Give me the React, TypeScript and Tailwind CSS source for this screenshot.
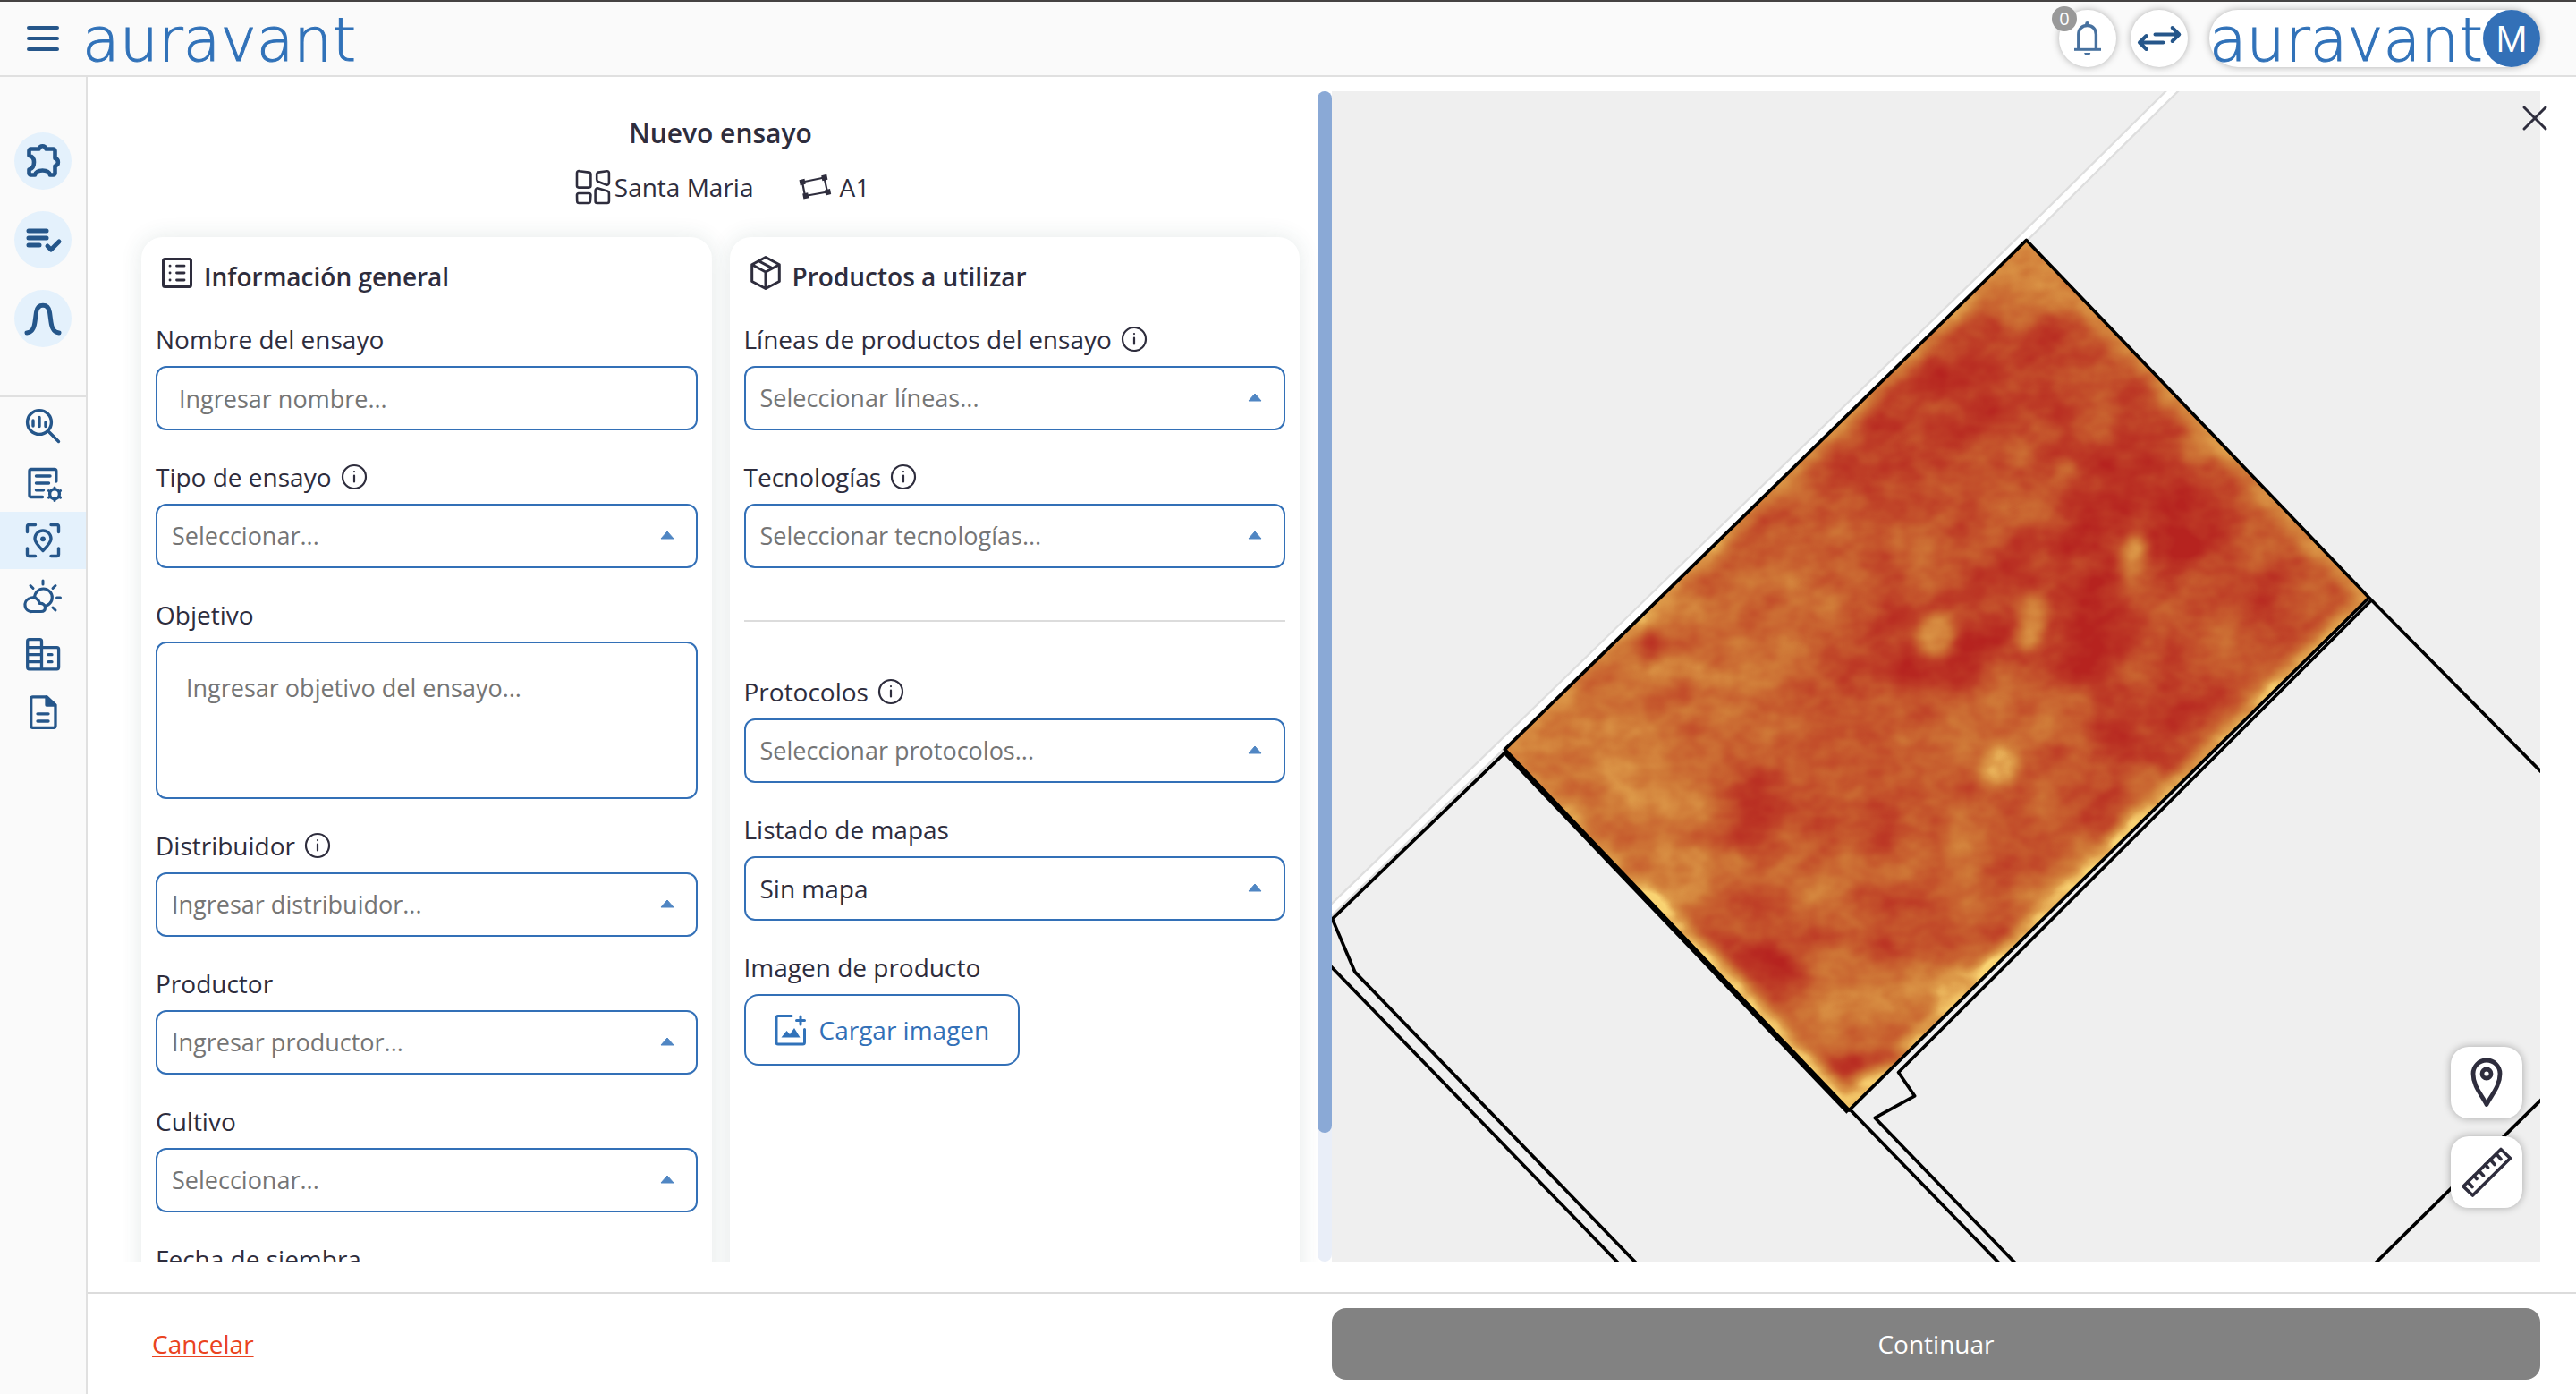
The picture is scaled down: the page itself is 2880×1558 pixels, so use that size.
import type { ReactNode } from "react";

const INK = "#2e2d3d";
const NAVY = "#25568a";

/* ---------- brand ---------- */

function Wordmark() {
  return (
    <span className="pt-1 font-['DejaVu_Sans',sans-serif] text-[68px] leading-[60px] font-extralight text-[#3172b9] [-webkit-text-stroke:1px_#3172b9]">
      auravant
    </span>
  );
}

/* ---------- icons ---------- */

function Stroke({
  size,
  color,
  width,
  children,
}: {
  size: number;
  color: string;
  width: number;
  children: ReactNode;
}) {
  return (
    <svg
      width={size}
      height={size}
      viewBox={`0 0 ${size} ${size}`}
      fill="none"
      stroke={color}
      strokeWidth={width}
      strokeLinecap="round"
      strokeLinejoin="round"
      className="block shrink-0"
      aria-hidden="true"
    >
      {children}
    </svg>
  );
}

const MenuIcon = () => (
  <Stroke size={40} color={NAVY} width={4}>
    <path d="M4 8h32M4 20h32M4 32h32" />
  </Stroke>
);

const PuzzleIcon = () => (
  <Stroke size={64} color={NAVY} width={4.6}>
    <path d="M16.500 26V20.500a2 2 0 0 1 2-2H27.500a4.200 4.600 0 0 1 8 0H43.500a2 2 0 0 1 2 2V29a4.300 4.300 0 0 1 0 8.400V45.500a2 2 0 0 1-2 2H40c-1-3.500-4-5-8.500-5s-7.500 1.500-8.500 5H18.500a2 2 0 0 1-2-2V41.500c4-1 5.500-4 5.500-8.300s-1.500-6.500-5.500-7.200z" />
  </Stroke>
);

const ListCheckIcon = () => (
  <Stroke size={64} color={NAVY} width={5}>
    <path d="M16 22h20M16 30h20M16 38h12M37 39l4 4 9-9" />
  </Stroke>
);

const CurveIcon = () => (
  <Stroke size={64} color={NAVY} width={5}>
    <path d="M14 48c5.500-.5 8-4 9-12l1.500-11c.8-5.500 3.500-7.700 7.500-7.700s6.700 2.200 7.500 7.700L41 36c1 8 3.500 11.500 9 12" />
  </Stroke>
);

const AnalysisIcon = () => (
  <Stroke size={48} color={NAVY} width={3.4}>
    <circle cx="20" cy="20" r="13.400" />
    <path d="M13 18v6M20 14.500v10M27 20v4.500M30.500 30.500l11 11" />
  </Stroke>
);

const NoteGearIcon = () => (
  <Stroke size={48} color={NAVY} width={3.4}>
    <path d="M38.800 22V10.500a2 2 0 0 0-2-2H11a2 2 0 0 0-2 2V37.500a2 2 0 0 0 2 2H23.500M16.500 16h15.500M16.500 24h14M16.500 31.800h8" />
    <circle cx="37" cy="36.300" r="5.400" />
    <path
      d="M37 30.500v-1.500M37 43.500v-1.500M31.700 33.200l-1.300-.7M43.600 40.100l-1.300-.7M42.300 33.200l1.300-.7M30.400 40.100l1.300-.7"
      strokeWidth="3"
    />
  </Stroke>
);

const FocusPinIcon = () => (
  <Stroke size={48} color={NAVY} width={3.4}>
    <path d="M6.500 14.500V8.500a2 2 0 0 1 2-2h7M33 6.500h6.500a2 2 0 0 1 2 2v6M41.500 33v6.500a2 2 0 0 1-2 2H33M15.500 41.500H8.500a2 2 0 0 1-2-2V33" />
    <path d="M24 35.500c-4.500-4.500-9-9-9-13.500a9 9 0 0 1 18 0c0 4.500-4.500 9-9 13.500z" />
    <circle cx="24" cy="22.300" r="2.900" fill={NAVY} stroke="none" />
  </Stroke>
);

const WeatherIcon = () => (
  <Stroke size={48} color={NAVY} width={3.2}>
    <path
      d="M24 5v4M10 10.500l3 3M38 10.500l-3 3M39.500 24h4M35 35l3 3"
      strokeWidth="3"
    />
    <circle cx="24.500" cy="23.800" r="9.800" />
    <path
      d="M11.500 39.500a7 7.500 0 0 1-3-14.500c3-2 7-1.500 9.500 1 1.500 1.500 2 2.800 2.300 4.500 3.500-.5 6.200 1.500 6.200 4.500s-2 4.500-4.500 4.500z"
      fill="#fafafa"
    />
  </Stroke>
);

const BuildingIcon = () => (
  <Stroke size={48} color={NAVY} width={3.3}>
    <path d="M22.500 39.800V8.700a2 2 0 0 0-2-2H8.700a2 2 0 0 0-2 2V37.800a2 2 0 0 0 2 2H39.600a2 2 0 0 0 2-2V17.700a2 2 0 0 0-2-2H6.700M6.700 23.700H22.500M6.700 31.700H22.500M30 23.700h4M30 31.700h4" />
  </Stroke>
);

const DocumentIcon = () => (
  <Stroke size={48} color={NAVY} width={3.3}>
    <path d="M28 6.800H12.700a2 2 0 0 0-2 2V39.300a2 2 0 0 0 2 2H36a2 2 0 0 0 2-2V16zM18 25.800h12M18 34h12" />
    <path d="M28 7v9h9.500z" fill={NAVY} />
  </Stroke>
);

const BellIcon = () => (
  <Stroke size={64} color="#47719f" width={3.4}>
    <path d="M21.800 43V27.500c0-6 4-10 9.800-10s9.800 4 9.800 10V43" />
    <path d="M18.500 44.300h27" strokeLinecap="square" strokeWidth="3" />
    <circle cx="31.600" cy="15.500" r="2.400" fill="#47719f" stroke="none" />
    <path d="M28.200 48h7c0 4-7 4-7 0z" fill="#47719f" stroke="none" />
  </Stroke>
);

const SwapIcon = () => (
  <Stroke size={64} color={NAVY} width={4}>
    <path d="M27.500 27.500H54M46.700 20l7.600 7.500-7.600 7.500M36.500 36.500H10.500M17.600 29l-7.600 7.500 7.600 7.500" />
  </Stroke>
);

const FarmIcon = () => (
  <Stroke size={40} color={INK} width={2.6}>
    <path d="M4.800 2.200l10.400 1.400a2.400 2.400 0 0 1 2.200 2.400V18.600a2 2 0 0 1-2 2H4a2 2 0 0 1-2-2V4.400a2.200 2.200 0 0 1 2.800-2.200zM4 27h11.400a2 2 0 0 1 2 2.200l-.5 6.800a2.200 2.200 0 0 1-2.200 2H4.400a2.200 2.200 0 0 1-2.200-2L2 29.200A2 2 0 0 1 4 27zM25.600 3.600l10-1.300a2 2 0 0 1 2.300 2V15.500a2.200 2.200 0 0 1-3 2l-9-3.500a2.800 2.800 0 0 1-1.700-2.500V6a2.400 2.400 0 0 1 1.400-2.400zM25.800 21.400l10.200 3a2.600 2.600 0 0 1 1.900 2.500V36a2 2 0 0 1-2 2H24.600a2 2 0 0 1-2-2V24a2.600 2.600 0 0 1 3.200-2.600z" />
  </Stroke>
);

const FieldIcon = () => (
  <Stroke size={40} color={INK} width={2.2}>
    <path d="M6 14.500L30.500 9.500 34 25.500 9 30z" />
    <g fill={INK} stroke="none">
      <path d="M2.500 12.200l6-1.400 1.200 6-6 1.400zM27.200 7.200l6-1.400 1.200 6-6 1.400zM31 23.400l6-1.400 1.200 6-6 1.400zM6.200 27.600l6-1.400 1.200 6-6 1.400z" />
    </g>
  </Stroke>
);

const ListBoxIcon = () => (
  <Stroke size={40} color={INK} width={3}>
    <rect x="4.500" y="4.500" width="31" height="31" rx="2" />
    <path d="M12 12.200h.1M12 20h.1M12 28h.1M19.500 12.200h8.500M19.500 20h8.500M19.500 28h8.500" strokeWidth="2.800" />
  </Stroke>
);

const PackageIcon = () => (
  <Stroke size={40} color={INK} width={3}>
    <path d="M20 2.500l15.300 8.300V29.500L20 37.500 4.700 29.500V10.800zM4.700 10.800L20 19l15.300-8.200M20 19v18.500M12.300 6.700l15.300 8.200" />
  </Stroke>
);

const InfoIcon = () => (
  <Stroke size={30} color={INK} width={2.2}>
    <circle cx="15" cy="15" r="13" />
    <path d="M15 13.500v7M15 9v.1" />
  </Stroke>
);

const ImagePlusIcon = () => (
  <Stroke size={40} color="#3172b9" width={3}>
    <path d="M21 4.500H6a2 2 0 0 0-2 2V34a2 2 0 0 0 2 2H33.500a2 2 0 0 0 2-2V19.500" />
    <path d="M31 5v9M26.500 9.500h9" />
    <path d="M9.500 28.500l6-7.500 3.500 4 5-7 6.500 10.500z" fill="#3172b9" stroke="none" />
  </Stroke>
);

const CloseIcon = () => (
  <Stroke size={40} color={INK} width={3}>
    <path d="M8 8l24 24M32 8L8 32" />
  </Stroke>
);

const MapPinIcon = () => (
  <Stroke size={80} color={INK} width={4.8}>
    <path d="M40 64.500C35 54 25 44.500 25 30a15 15 0 0 1 30 0c0 14.500-10 24-15 34.500z" />
    <circle cx="40" cy="30" r="5" />
  </Stroke>
);

const RulerIcon = () => (
  <Stroke size={80} color={INK} width={3.6}>
    <path d="M14 56L56 14.500 66.500 24.500 24.500 66z" />
    <path d="M19 51l5 5.500M26 44l3 3.500M31.500 38.500l5 5.500M38.500 31.500l3 3.500M44 26l5 5.500M51 20l5 5.500" />
  </Stroke>
);

/* ---------- header & sidebar ---------- */

function Header() {
  return (
    <header className="flex h-[86px] shrink-0 items-center justify-between border-t-2 border-b-2 border-t-[#454343] border-b-[#e0e0e0] bg-[#fafafa] pr-10 pl-7">
      <div className="flex items-center gap-6">
        <button type="button" aria-label="Menú">
          <MenuIcon />
        </button>
        <a href="#inicio" className="flex items-center">
          <Wordmark />
        </a>
      </div>
      <div className="flex items-center">
        <button
          type="button"
          aria-label="Notificaciones"
          className="relative mr-4 rounded-full bg-white shadow-[0_0_8px_rgba(0,0,0,0.3)]"
        >
          <BellIcon />
          <span className="absolute -top-1 -left-2 flex size-7 items-center justify-center rounded-full bg-[#999999] text-xl text-white">
            0
          </span>
        </button>
        <button
          type="button"
          aria-label="Cambiar cuenta"
          className="mr-6 rounded-full bg-white shadow-[0_0_8px_rgba(0,0,0,0.3)]"
        >
          <SwapIcon />
        </button>
        <button
          type="button"
          className="flex h-16 items-center rounded-full bg-white shadow-[0_0_8px_rgba(0,0,0,0.3)]"
        >
          <Wordmark />
          <span className="flex size-16 items-center justify-center rounded-full bg-[#3370b7] text-[40px] font-medium text-white">
            M
          </span>
        </button>
      </div>
    </header>
  );
}

const shortcuts = [
  { label: "Extensiones", icon: <PuzzleIcon /> },
  { label: "Tareas", icon: <ListCheckIcon /> },
  { label: "Curvas", icon: <CurveIcon /> },
];

const sections = [
  { label: "Análisis", icon: <AnalysisIcon />, active: false },
  { label: "Planificación", icon: <NoteGearIcon />, active: false },
  { label: "Ensayos", icon: <FocusPinIcon />, active: true },
  { label: "Clima", icon: <WeatherIcon />, active: false },
  { label: "Empresa", icon: <BuildingIcon />, active: false },
  { label: "Reportes", icon: <DocumentIcon />, active: false },
];

function Sidebar() {
  return (
    <nav className="w-[98px] shrink-0 border-r-2 border-[#e0e0e0] bg-[#fafafa]">
      <div className="flex flex-col items-center gap-6 border-b-2 border-[#e0e0e0] pt-[62px] pb-[54px]">
        {shortcuts.map((item) => (
          <a key={item.label} href="#accesos" aria-label={item.label} className="rounded-full bg-[#e4f1fc]">
            {item.icon}
          </a>
        ))}
      </div>
      {sections.map((item) => (
        <a
          key={item.label}
          href="#seccion"
          aria-label={item.label}
          className={`flex h-16 items-center justify-center ${item.active ? "bg-[#e4f1fc]" : ""}`}
        >
          {item.icon}
        </a>
      ))}
    </nav>
  );
}

/* ---------- form ---------- */

function Field({
  id,
  label,
  info = false,
  children,
}: {
  id: string;
  label: string;
  info?: boolean;
  children: ReactNode;
}) {
  return (
    <div>
      <div className="mb-2.5 flex items-center gap-2.5">
        <label htmlFor={id}>{label}</label>
        {info && (
          <button type="button" aria-label={`Ayuda: ${label}`}>
            <InfoIcon />
          </button>
        )}
      </div>
      {children}
    </div>
  );
}

function SelectField({
  id,
  label,
  value,
  info,
  filled = false,
}: {
  id: string;
  label: string;
  value: string;
  info?: boolean;
  filled?: boolean;
}) {
  return (
    <Field id={id} label={label} info={info}>
      <div className="relative">
        <select
          id={id}
          className={`block h-[72px] w-full appearance-none rounded-xl border-2 border-[#3370b7] bg-white px-4 ${filled ? "text-[#2e2d3d]" : "text-[27px] text-[#757575]"}`}
        >
          <option>{value}</option>
        </select>
        <svg
          viewBox="0 0 16 10"
          className="pointer-events-none absolute top-[30px] right-[26px] h-2.5 w-4"
          aria-hidden="true"
        >
          <path d="M8 1l7 8H1z" fill="#5086c3" stroke="#5086c3" strokeLinejoin="round" />
        </svg>
      </div>
    </Field>
  );
}

function Card({ icon, title, children }: { icon: ReactNode; title: string; children: ReactNode }) {
  return (
    <section className="rounded-3xl bg-white px-4 pt-5 pb-6 shadow-[0_0_24px_rgba(40,80,70,0.12)]">
      <h2 className="mb-[30px] flex items-start gap-2.5 pl-1 font-semibold">
        {icon}
        <span className="pt-1">{title}</span>
      </h2>
      <div className="flex flex-col gap-8">{children}</div>
    </section>
  );
}

function TrialForm() {
  return (
    <div className="flex min-h-0 min-w-0">
      <div className="min-w-0 flex-1 overflow-y-auto px-5 pt-[27px] [scrollbar-width:none]">
        <h1 className="text-center text-[30px] leading-10 font-semibold">Nuevo ensayo</h1>
        <div className="mt-5 mb-9 flex justify-center gap-12 pl-1">
          <span className="flex gap-1">
            <FarmIcon />
            Santa Maria
          </span>
          <span className="flex gap-2">
            <FieldIcon />
            A1
          </span>
        </div>
        <div className="grid grid-cols-2 gap-5">
          <Card icon={<ListBoxIcon />} title="Información general">
            <Field id="nombre" label="Nombre del ensayo">
              <input
                id="nombre"
                type="text"
                placeholder="Ingresar nombre..."
                className="block h-[72px] w-full rounded-xl border-2 border-[#3370b7] px-6 text-[27px] placeholder:text-[#757575]"
              />
            </Field>
            <SelectField id="tipo" label="Tipo de ensayo" value="Seleccionar..." info />
            <Field id="objetivo" label="Objetivo">
              <textarea
                id="objetivo"
                placeholder="Ingresar objetivo del ensayo..."
                className="block h-44 w-full resize-none rounded-xl border-2 border-[#3370b7] px-8 py-[30px] text-[27px] placeholder:text-[#757575]"
              />
            </Field>
            <SelectField id="distribuidor" label="Distribuidor" value="Ingresar distribuidor..." info />
            <SelectField id="productor" label="Productor" value="Ingresar productor..." />
            <SelectField id="cultivo" label="Cultivo" value="Seleccionar..." />
            <Field id="siembra" label="Fecha de siembra">
              <input
                id="siembra"
                type="text"
                className="block h-[72px] w-full rounded-xl border-2 border-[#3370b7] px-6 text-[27px]"
              />
            </Field>
          </Card>
          <Card icon={<PackageIcon />} title="Productos a utilizar">
            <SelectField id="lineas" label="Líneas de productos del ensayo" value="Seleccionar líneas..." info />
            <SelectField id="tecnologias" label="Tecnologías" value="Seleccionar tecnologías..." info />
            <hr className="my-[26px] border-t-2 border-[#dcdcdc]" />
            <SelectField id="protocolos" label="Protocolos" value="Seleccionar protocolos..." info />
            <SelectField id="mapas" label="Listado de mapas" value="Sin mapa" filled />
            <Field id="imagen" label="Imagen de producto">
              <button
                id="imagen"
                type="button"
                className="flex h-20 items-center gap-3 rounded-2xl border-2 border-[#3370b7] pr-8 pl-[30px] text-[#3370b7]"
              >
                <ImagePlusIcon />
                Cargar imagen
              </button>
            </Field>
          </Card>
        </div>
      </div>
      <div className="w-4 shrink-0 rounded-full bg-[#e9eef8]">
        <div className="h-[89%] rounded-full bg-[#8aa9d6]" />
      </div>
    </div>
  );
}

/* ---------- field map ---------- */

// cx, cy, rx, ry, rotation, grey level (0 = deep red, 255 = yellow), opacity
const heat: number[][] = [
  [400, 790, 230, 120, -45, 150, 0.8],
  [520, 660, 130, 40, -40, 125, 0.6],
  [430, 860, 140, 50, 45, 160, 0.8],
  [620, 630, 60, 26, -30, 150, 0.6],
  [560, 760, 40, 60, 20, 160, 0.5],
  [830, 370, 150, 60, -42, 25, 0.85],
  [740, 440, 100, 50, -40, 45, 0.7],
  [890, 245, 60, 50, 0, 175, 0.9],
  [960, 400, 110, 60, 30, 55, 0.6],
  [1030, 520, 110, 80, 20, 15, 0.85],
  [940, 580, 120, 50, -20, 35, 0.7],
  [1090, 440, 60, 30, 40, 50, 0.7],
  [960, 670, 70, 60, 0, 10, 0.9],
  [780, 670, 100, 50, 0, 25, 0.85],
  [770, 715, 55, 20, 0, 10, 0.8],
  [680, 740, 60, 30, 0, 60, 0.6],
  [1180, 630, 80, 50, 0, 60, 0.7],
  [1050, 770, 90, 60, -40, 30, 0.85],
  [1100, 720, 60, 40, -40, 90, 0.5],
  [990, 860, 60, 30, -40, 50, 0.7],
  [840, 770, 120, 40, -15, 140, 0.6],
  [720, 830, 120, 40, -10, 110, 0.5],
  [580, 890, 70, 60, 30, 35, 0.75],
  [500, 800, 40, 30, 30, 55, 0.6],
  [700, 900, 140, 50, -15, 80, 0.5],
  [560, 1050, 40, 70, -20, 20, 0.9],
  [590, 940, 60, 30, 0, 70, 0.5],
  [620, 960, 60, 34, 0, 165, 0.8],
  [800, 920, 80, 34, -20, 150, 0.6],
  [750, 1040, 60, 40, 0, 65, 0.7],
  [690, 1110, 110, 44, -10, 165, 0.9],
  [880, 920, 60, 20, -40, 60, 0.5],
  [930, 950, 70, 24, -42, 165, 0.7],
  [460, 960, 40, 30, 30, 185, 0.8],
  [540, 1000, 30, 20, 40, 150, 0.5],
];

const spots: number[][] = [
  [778, 668, 24, 26, 20, 190, 1],
  [856, 824, 23, 25, 20, 222, 1],
  [894, 652, 16, 34, 10, 178, 0.95],
  [1020, 578, 14, 30, 15, 178, 0.9],
  [800, 1090, 30, 24, -40, 228, 0.9],
  [700, 1198, 24, 12, 0, 235, 1],
  [418, 650, 18, 10, -40, 235, 0.9],
  [880, 292, 20, 9, 0, 170, 0.8],
  [936, 470, 12, 12, 0, 130, 0.7],
  [1100, 445, 20, 22, 30, 175, 0.8],
  [1035, 845, 26, 22, 0, 165, 0.8],
  [424, 685, 16, 20, 20, 40, 0.7],
  [655, 628, 18, 10, -20, 160, 0.7],
  [700, 1172, 50, 10, -6, 15, 0.9],
  [460, 735, 18, 16, 0, 50, 0.6],
  [1178, 636, 14, 12, 0, 10, 0.7],
];

function Blobs({ items }: { items: number[][] }) {
  return (
    <>
      {items.map(([cx, cy, rx, ry, rotation, level, opacity]) => (
        <ellipse
          key={`${cx}-${cy}`}
          cx={cx}
          cy={cy}
          rx={rx}
          ry={ry}
          transform={`rotate(${rotation} ${cx} ${cy})`}
          fill={`rgb(${level},${level},${level})`}
          opacity={opacity}
        />
      ))}
    </>
  );
}

function FieldMap() {
  return (
    <svg
      viewBox="0 0 1352 1308"
      preserveAspectRatio="xMidYMid slice"
      className="absolute inset-0 size-full"
      role="img"
      aria-label="Mapa del lote A1"
    >
      <defs>
        <clipPath id="lot">
          <path d="M889 200L1312 624 670 1232 245 804z" />
        </clipPath>
        <filter id="soft" x="-20%" y="-20%" width="140%" height="140%" colorInterpolationFilters="sRGB">
          <feGaussianBlur stdDeviation="18" />
        </filter>
        <filter id="crisp" x="-20%" y="-20%" width="140%" height="140%" colorInterpolationFilters="sRGB">
          <feGaussianBlur stdDeviation="7" />
        </filter>
        <filter
          id="ramp"
          filterUnits="userSpaceOnUse"
          x="200"
          y="180"
          width="1150"
          height="1080"
          colorInterpolationFilters="sRGB"
        >
          <feTurbulence type="fractalNoise" baseFrequency="0.019 0.026" numOctaves="3" seed="4" result="noise" />
          <feColorMatrix
            in="noise"
            type="matrix"
            values="1 0 0 0 0  1 0 0 0 0  1 0 0 0 0  0 0 0 0 1"
            result="grey"
          />
          <feComposite in="SourceGraphic" in2="grey" operator="arithmetic" k2="1" k3="0.56" k4="-0.28" result="sum" />
          <feColorMatrix
            in="sum"
            type="matrix"
            values="1 0 0 0 0  0 1 0 0 0  0 0 1 0 0  0 0 0 0 1"
            result="opaque"
          />
          <feComponentTransfer in="opaque">
            <feFuncR type="table" tableValues="0.715 0.745 0.780 0.815 0.870 0.980" />
            <feFuncG type="table" tableValues="0.140 0.235 0.360 0.480 0.610 0.830" />
            <feFuncB type="table" tableValues="0.125 0.150 0.180 0.220 0.290 0.450" />
          </feComponentTransfer>
        </filter>
      </defs>
      <rect width="1352" height="1308" fill="#efefef" />
      <g transform="translate(-28 -22) scale(0.9056 0.9423)" fill="none" strokeLinejoin="round">
        <path d="M1090 3L889 194 240 800 10 1014" stroke="#dedede" strokeWidth="13" />
        <path d="M1090 3L889 194 240 800 10 1014" stroke="#ffffff" strokeWidth="8" />
        <g clipPath="url(#lot)">
          <g filter="url(#ramp)">
            <rect x="200" y="180" width="1150" height="1080" fill="rgb(98,98,98)" />
            <g filter="url(#soft)">
              <Blobs items={heat} />
            </g>
            <g filter="url(#crisp)">
              <path d="M889 200L245 804" stroke="rgb(180,180,180)" strokeWidth="24" />
              <path d="M889 200L1312 624" stroke="rgb(180,180,180)" strokeWidth="30" />
              <path d="M1312 624L670 1232" stroke="rgb(225,225,225)" strokeWidth="24" />
              <path d="M1050 872L670 1232 400 960" stroke="rgb(250,250,250)" strokeWidth="30" />
              <path d="M400 960L245 804" stroke="rgb(190,190,190)" strokeWidth="20" />
              <Blobs items={spots} />
            </g>
          </g>
        </g>
        <g stroke="#000000" strokeWidth="4">
          <path d="M889 200L1312 624 670 1232 245 804z" />
          <path d="M244 806L669 1234" strokeWidth="6" />
          <path d="M245 808L32 1005 60 1068 408 1414M28 1059L386 1414" />
          <path d="M672 1232L856 1414M1312 624L1528 834" />
          <path d="M1314 628L731 1187 751 1215 702 1241 876 1414" />
          <path d="M1528 1216L1319 1414" />
        </g>
      </g>
    </svg>
  );
}

function MapPanel() {
  return (
    <div className="relative min-w-0">
      <FieldMap />
      <button type="button" aria-label="Cerrar" className="absolute top-2.5 -right-3.5">
        <CloseIcon />
      </button>
      <div className="absolute right-5 bottom-[60px] flex flex-col gap-5">
        <button
          type="button"
          aria-label="Marcar punto"
          className="rounded-[20px] bg-white shadow-[0_0_10px_rgba(0,0,0,0.3)]"
        >
          <MapPinIcon />
        </button>
        <button
          type="button"
          aria-label="Medir"
          className="rounded-[20px] bg-white shadow-[0_0_10px_rgba(0,0,0,0.3)]"
        >
          <RulerIcon />
        </button>
      </div>
    </div>
  );
}

/* ---------- page ---------- */

export default function App() {
  return (
    <div className="flex h-screen flex-col overflow-hidden bg-white font-['Open_Sans',sans-serif] text-[28px] leading-10 text-[#2e2d3d]">
      <Header />
      <div className="flex min-h-0 flex-1">
        <Sidebar />
        <div className="flex min-w-0 flex-1 flex-col">
          <main className="grid min-h-0 flex-1 grid-cols-2 px-10 pt-4 pb-[34px]">
            <TrialForm />
            <MapPanel />
          </main>
          <footer className="grid grid-cols-2 items-center border-t-2 border-[#dcdcdc] px-10 py-4">
            <div className="pl-8">
              <a href="#cancelar" className="text-[#ea4320] underline">
                Cancelar
              </a>
            </div>
            <button type="button" className="h-20 rounded-2xl bg-[#828282] text-white">
              Continuar
            </button>
          </footer>
        </div>
      </div>
    </div>
  );
}
